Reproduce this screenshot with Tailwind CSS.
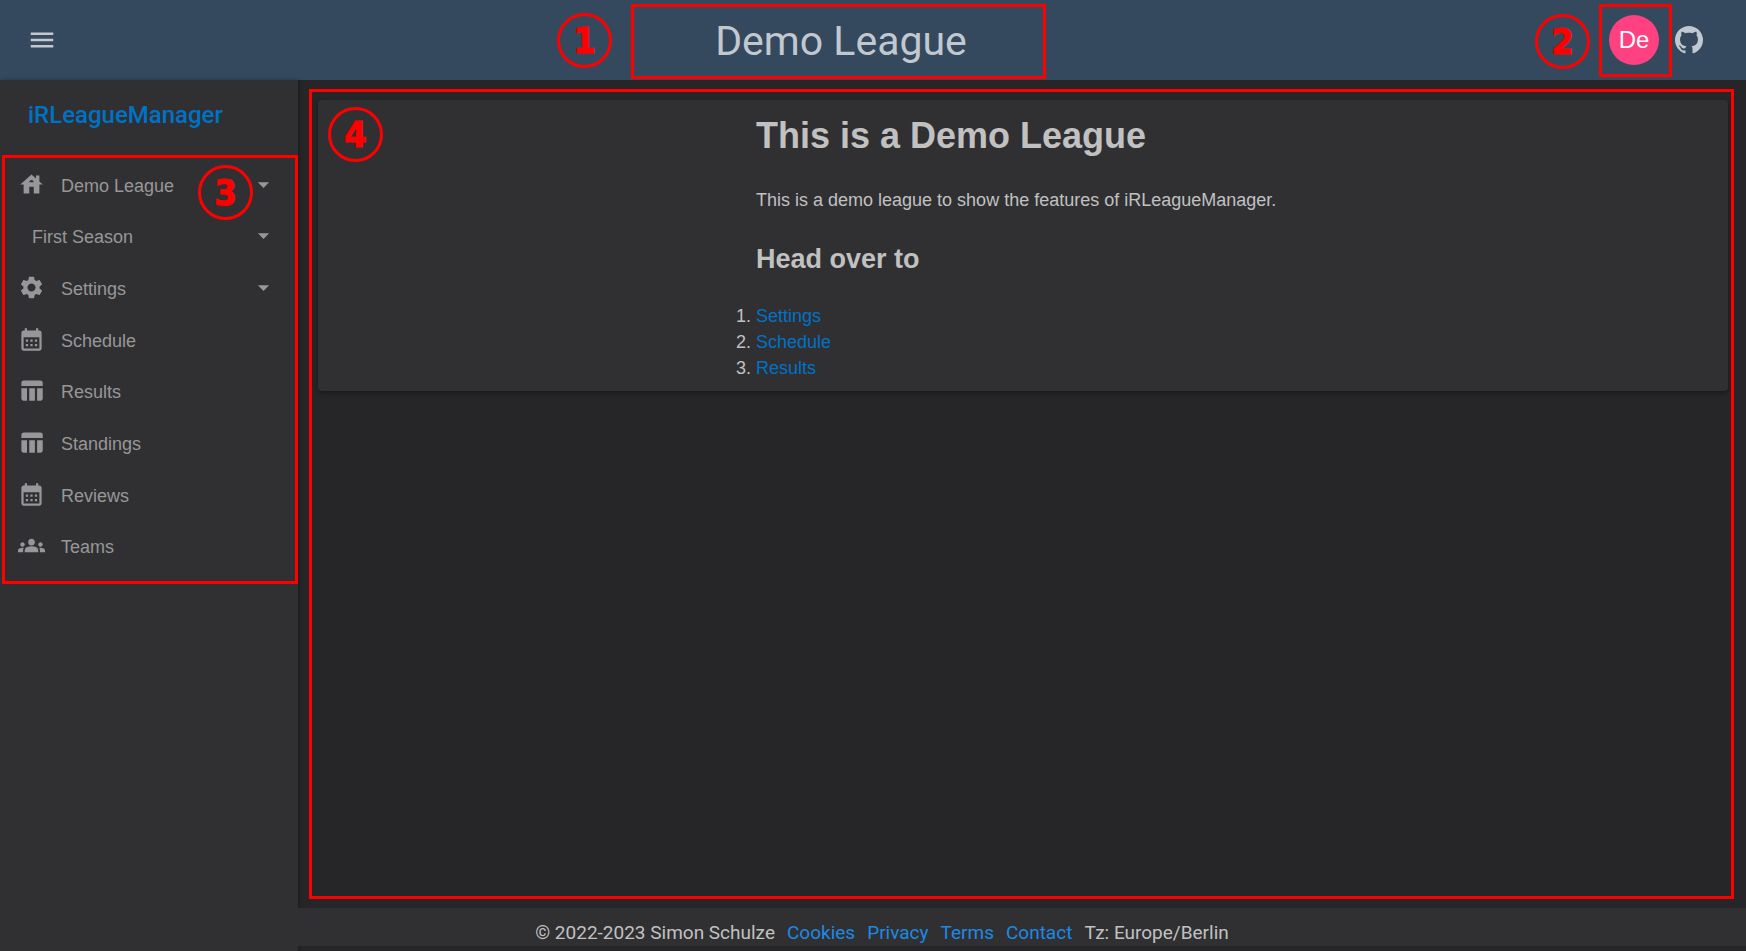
<!DOCTYPE html>
<html lang="en">
<head>
<meta charset="utf-8">
<title>Demo League</title>
<script src="https://cdn.jsdelivr.net/npm/@tailwindcss/browser@4"></script>
</head>
<body class="relative flex min-h-screen flex-col bg-[#262628] font-['Liberation_Sans',sans-serif] text-[18px] leading-[26px] text-[#c1c1c1]">
<svg class="hidden">
  <symbol id="house" viewBox="0 0 24 24"><path d="M19 9.3V4h-3v2.6L12 3 2 12h3v8h5v-6h4v6h5v-8h3l-3-2.7zm-9 .7c0-1.1.9-2 2-2s2 .9 2 2h-4z"/></symbol>
  <symbol id="gear" viewBox="0 0 24 24"><path d="M19.14 12.94c.04-.3.06-.61.06-.94 0-.32-.02-.64-.07-.94l2.03-1.58c.18-.14.23-.41.12-.61l-1.92-3.32c-.12-.22-.37-.29-.59-.22l-2.39.96c-.5-.38-1.03-.7-1.62-.94l-.36-2.54c-.04-.24-.24-.41-.48-.41h-3.84c-.24 0-.43.17-.47.41l-.36 2.54c-.59.24-1.13.57-1.62.94l-2.39-.96c-.22-.08-.47 0-.59.22L2.74 8.87c-.12.21-.08.47.12.61l2.03 1.58c-.05.3-.09.63-.09.94s.02.64.07.94l-2.03 1.58c-.18.14-.23.41-.12.61l1.92 3.32c.12.22.37.29.59.22l2.39-.96c.5.38 1.03.7 1.62.94l.36 2.54c.05.24.24.41.48.41h3.84c.24 0 .44-.17.47-.41l.36-2.54c.59-.24 1.13-.56 1.62-.94l2.39.96c.22.08.47 0 .59-.22l1.92-3.32c.12-.22.07-.47-.12-.61l-2.01-1.58zM12 15.6c-1.98 0-3.6-1.62-3.6-3.6s1.62-3.6 3.6-3.6 3.6 1.62 3.6 3.6-1.62 3.6-3.6 3.6z"/></symbol>
  <symbol id="calendar" viewBox="0 0 24 24"><path d="M19 4h-1V2h-2v2H8V2H6v2H5c-1.11 0-1.99.9-1.99 2L3 20c0 1.1.89 2 2 2h14c1.1 0 2-.9 2-2V6c0-1.1-.9-2-2-2zm0 16H5V10h14v10zM9 14H7v-2h2v2zm4 0h-2v-2h2v2zm4 0h-2v-2h2v2zm-8 4H7v-2h2v2zm4 0h-2v-2h2v2zm4 0h-2v-2h2v2z"/></symbol>
  <symbol id="table" viewBox="0 0 24 24"><path d="M10 10.02h5V21h-5zM17 21h3c1.1 0 2-.9 2-2v-9h-5v11zm3-18H5c-1.1 0-2 .9-2 2v3h19V5c0-1.1-.9-2-2-2zM3 19c0 1.1.9 2 2 2h3V10H3v9z"/></symbol>
  <symbol id="groups" viewBox="0 0 24 24"><path d="M12 12.75c1.63 0 3.07.39 4.24.9 1.08.48 1.76 1.56 1.76 2.73V18H6v-1.61c0-1.18.68-2.26 1.76-2.73 1.17-.52 2.61-.91 4.24-.91zM4 13c1.1 0 2-.9 2-2s-.9-2-2-2-2 .9-2 2 .9 2 2 2zm1.13 1.1c-.37-.06-.74-.1-1.13-.1-.99 0-1.93.21-2.78.58C.48 14.9 0 15.62 0 16.43V18h4.5v-1.61c0-.83.23-1.61.63-2.29zM20 13c1.1 0 2-.9 2-2s-.9-2-2-2-2 .9-2 2 .9 2 2 2zm4 3.43c0-.81-.48-1.53-1.22-1.85-.85-.37-1.79-.58-2.78-.58-.39 0-.76.04-1.13.1.4.68.63 1.46.63 2.29V18H24v-1.57zM12 6c1.66 0 3 1.34 3 3s-1.34 3-3 3-3-1.34-3-3 1.34-3 3-3z"/></symbol>
  <symbol id="caret" viewBox="0 0 24 24"><path d="M7 10l5 5 5-5z"/></symbol>
</svg>

<header class="flex h-20 items-center bg-[#34495e] pr-[43px] pl-[27px] text-[#c2c8cf]">
  <button aria-label="Toggle menu" class="mr-4"><svg class="block size-[30px] fill-current" viewBox="0 0 24 24"><path d="M3 18h18v-2H3v2zm0-5h18v-2H3v2zm0-7v2h18V6H3z"/></svg></button>
  <div class="grow pt-[2px] text-center font-[Roboto,sans-serif] text-[41px] leading-[48px]">Demo League</div>
  <div class="flex items-center gap-4">
    <button class="size-[50px] rounded-full bg-[#ff4081] text-[24px] text-white">De</button>
    <a href="#" aria-label="GitHub"><svg class="block size-7 fill-current" viewBox="0 0 24 24"><path d="M12.007 0C6.12 0 1.1 4.27.157 10.08c-.944 5.813 2.468 11.45 8.054 13.312.19.064.397.033.555-.084.16-.117.25-.304.244-.5v-2.042c-3.33.735-4.037-1.56-4.037-1.56-.22-.726-.694-1.35-1.334-1.756-1.096-.75.074-.735.074-.735.773.103 1.454.557 1.846 1.23.694 1.21 2.23 1.638 3.45.96.056-.61.327-1.178.766-1.605-2.67-.3-5.462-1.335-5.462-6.002-.02-1.193.42-2.35 1.23-3.226-.327-1.015-.27-2.116.166-3.09 0 0 1.006-.33 3.3 1.23 1.966-.538 4.04-.538 6.003 0 2.295-1.5 3.3-1.23 3.3-1.23.445 1.006.49 2.144.12 3.18.81.877 1.25 2.033 1.23 3.226 0 4.607-2.805 5.627-5.476 5.927.578.583.88 1.386.825 2.206v3.29c-.005.2.092.393.26.507.164.115.377.14.565.063 5.568-1.88 8.956-7.514 8.007-13.313C22.892 4.267 17.884.007 12.008 0z"/></svg></a>
  </div>
</header>

<div class="flex grow">
  <aside class="w-[298px] shrink-0 bg-[#303032] shadow-[1px_0_4px_rgba(0,0,0,0.3)]">
    <a href="#" class="block px-7 pt-[22px] font-[Roboto,sans-serif] text-[24px] font-medium text-[#0072c6]">iRLeagueManager</a>
    <nav class="mt-8 grid h-[413px] grid-rows-8 text-[#979798]">
      <button class="flex items-center pr-[21px] pl-[18px] text-left"><svg class="mr-4 mb-[3px] size-[27px] fill-current"><use href="#house"/></svg><span class="grow">Demo League</span><svg class="mb-[3px] size-[27px] fill-current"><use href="#caret"/></svg></button>
      <button class="flex items-center pr-[21px] pl-8 text-left"><span class="grow">First Season</span><svg class="mb-[3px] size-[27px] fill-current"><use href="#caret"/></svg></button>
      <button class="flex items-center pr-[21px] pl-[18px] text-left"><svg class="mr-4 mb-[3px] size-[27px] fill-current"><use href="#gear"/></svg><span class="grow">Settings</span><svg class="mb-[3px] size-[27px] fill-current"><use href="#caret"/></svg></button>
      <a href="#" class="flex items-center gap-4 pl-[18px]"><svg class="mb-[3px] size-[27px] fill-current"><use href="#calendar"/></svg>Schedule</a>
      <a href="#" class="flex items-center gap-4 pl-[18px]"><svg class="mb-[3px] size-[27px] fill-current"><use href="#table"/></svg>Results</a>
      <a href="#" class="flex items-center gap-4 pl-[18px]"><svg class="mb-[3px] size-[27px] fill-current"><use href="#table"/></svg>Standings</a>
      <a href="#" class="flex items-center gap-4 pl-[18px]"><svg class="mb-[3px] size-[27px] fill-current"><use href="#calendar"/></svg>Reviews</a>
      <a href="#" class="flex items-center gap-4 pl-[18px]"><svg class="mb-[3px] size-[27px] fill-current"><use href="#groups"/></svg>Teams</a>
    </nav>
  </aside>

  <div class="flex grow flex-col pb-[5px]">
    <main class="grow pt-5 pr-[18px] pl-5">
      <article class="flex justify-center rounded-[4px] bg-[#303032] pt-[9px] pb-[10px] shadow-[0_2px_4px_rgba(0,0,0,0.35)]">
        <div class="w-[534px] max-w-full">
          <h1 class="text-[36px] leading-[54px] font-bold">This is a Demo League</h1>
          <p class="mt-6">This is a demo league to show the features of iRLeagueManager.</p>
          <h2 class="mt-[26px] text-[27px] leading-10 font-bold">Head over to</h2>
          <ol class="mt-6 list-decimal">
            <li><a href="#" class="text-[#0072c6]">Settings</a></li>
            <li><a href="#" class="text-[#0072c6]">Schedule</a></li>
            <li><a href="#" class="text-[#0072c6]">Results</a></li>
          </ol>
        </div>
      </article>
    </main>
    <footer class="flex h-[38px] items-center justify-center gap-3 bg-[#303032] pt-3 pr-[280px] font-[Roboto,sans-serif] text-[19px]">
      <span>© 2022-2023 Simon Schulze</span>
      <a href="#" class="text-[#1e88e5]">Cookies</a>
      <a href="#" class="text-[#1e88e5]">Privacy</a>
      <a href="#" class="text-[#1e88e5]">Terms</a>
      <a href="#" class="text-[#1e88e5]">Contact</a>
      <span>Tz: Europe/Berlin</span>
    </footer>
  </div>
</div>

<!-- Annotation frames and numbered markers laid over the page -->
<div class="pointer-events-none absolute inset-0 font-['DejaVu_Sans_Condensed','DejaVu_Sans',sans-serif] text-[36px] font-bold text-[#ff0000]">
  <div class="absolute top-[4px] left-[631px] h-[75px] w-[415px] border-3"></div>
  <div class="absolute top-[4px] left-[1599px] h-[73px] w-[73px] border-3"></div>
  <div class="absolute top-[155px] left-[2px] h-[429px] w-[296px] border-3"></div>
  <div class="absolute top-[89px] left-[309px] h-[810px] w-[1425px] border-3"></div>
  <div class="absolute top-[13px] left-[557px] flex size-[55px] items-center justify-center rounded-full border-3 [-webkit-text-stroke:1px_#ff0000]">1</div>
  <div class="absolute top-[14px] left-[1535px] flex size-[55px] items-center justify-center rounded-full border-3 [-webkit-text-stroke:1px_#ff0000]">2</div>
  <div class="absolute top-[165px] left-[198px] flex size-[55px] items-center justify-center rounded-full border-3 [-webkit-text-stroke:1px_#ff0000]">3</div>
  <div class="absolute top-[107px] left-[328px] flex size-[55px] items-center justify-center rounded-full border-3 [-webkit-text-stroke:1px_#ff0000]">4</div>
</div>
</body>
</html>
